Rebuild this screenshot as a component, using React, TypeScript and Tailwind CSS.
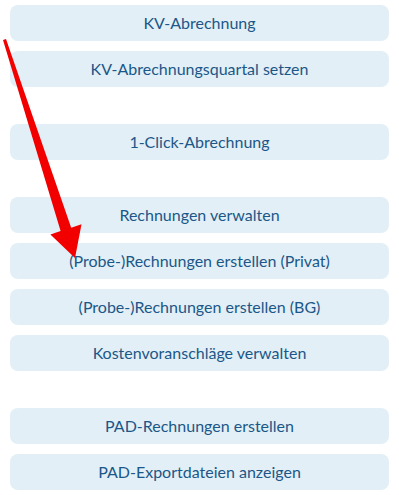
import React from "react";

const Btn = ({ label, extra = "" }: { label: string; extra?: string }) => (
  <div
    className={`h-[36px] rounded-[8px] bg-[#e2eff6] flex items-center justify-center text-[16px] text-[#1b5788] ${extra}`}
    style={{ fontFamily: "Lato, 'Open Sans', sans-serif" }}
  >
    {label}
  </div>
);

export default function App() {
  return (
    <div className="relative w-[399px] h-[495px] bg-white overflow-hidden">
      <div className="flex flex-col gap-[10px] pt-[5px] pl-[10px] pr-[10px] w-[399px]">
        <Btn label="KV-Abrechnung" />
        <Btn label="KV-Abrechnungsquartal setzen" />
        <Btn label="1-Click-Abrechnung" extra="mt-[27px]" />
        <Btn label="Rechnungen verwalten" extra="mt-[27px]" />
        <Btn label="(Probe-)Rechnungen erstellen (Privat)" />
        <Btn label="(Probe-)Rechnungen erstellen (BG)" />
        <Btn label="Kostenvoranschläge verwalten" />
        <Btn label="PAD-Rechnungen erstellen" extra="mt-[27px]" />
        <Btn label="PAD-Exportdateien anzeigen" />
      </div>
      <svg className="absolute left-0 top-0" width="399" height="495" viewBox="0 0 399 495">
        <polygon
          points="3,40 6,39 71.2,227.7 81.5,224.3 75,258 50.4,234.5 60.6,231.1"
          fill="#f20000"
        />
      </svg>
    </div>
  );
}
